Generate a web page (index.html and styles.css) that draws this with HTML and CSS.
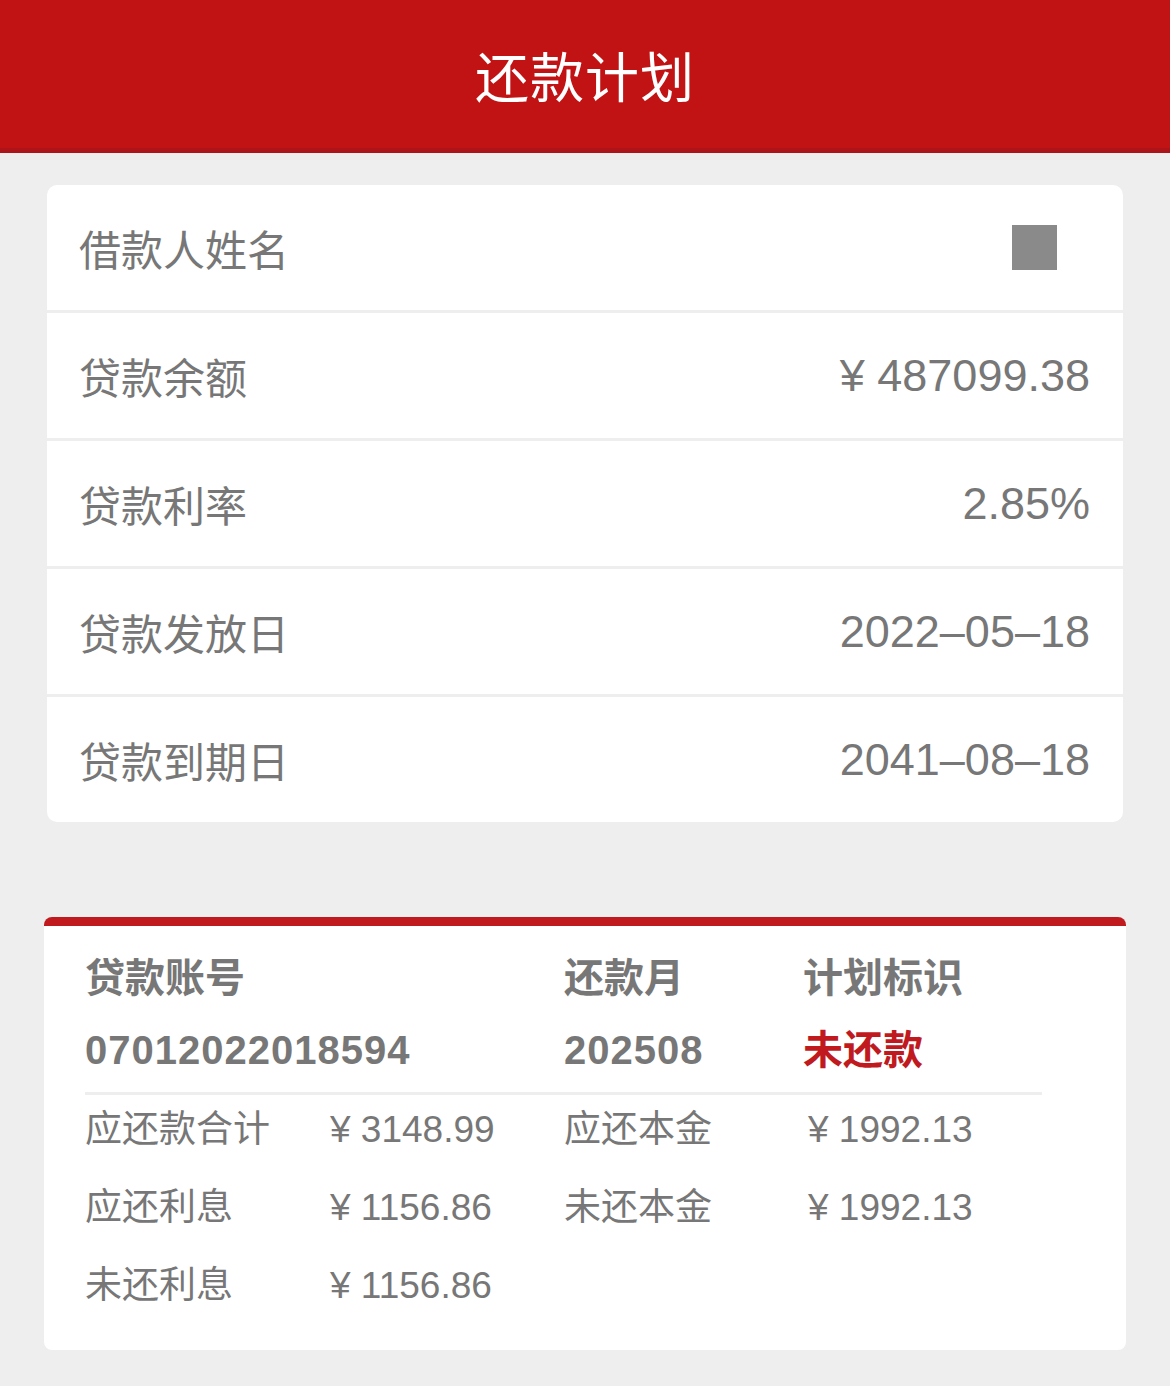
FILE: index.html
```html
<!doctype html>
<html lang="zh-CN">
  <head>
    <meta charset="UTF-8" />
    <meta name="viewport" content="width=device-width, initial-scale=1.0" />
    <title>还款计划</title>
    <link rel="stylesheet" href="styles.css">
  </head>
  <body>
    <header class="top-bar">
      <h1>还款计划</h1>
    </header>

    <section class="info-card">
      <div class="info-row">
        <span class="info-label">借款人姓名</span>
        <span class="name-mask"></span>
      </div>
      <div class="info-row">
        <span class="info-label">贷款余额</span>
        <span class="info-value">¥ 487099.38</span>
      </div>
      <div class="info-row">
        <span class="info-label">贷款利率</span>
        <span class="info-value">2.85%</span>
      </div>
      <div class="info-row">
        <span class="info-label">贷款发放日</span>
        <span class="info-value">2022–05–18</span>
      </div>
      <div class="info-row">
        <span class="info-label">贷款到期日</span>
        <span class="info-value">2041–08–18</span>
      </div>
    </section>

    <section class="plan-card">
      <div class="plan-head">
        <span class="head-title wide">贷款账号</span>
        <span class="head-title">还款月</span>
        <span class="head-title">计划标识</span>
        <span class="head-value wide">07012022018594</span>
        <span class="head-value">202508</span>
        <span class="head-value status">未还款</span>
      </div>
      <div class="plan-detail">
        <span class="detail-label">应还款合计</span>
        <span class="detail-value">¥ 3148.99</span>
        <span class="detail-label">应还本金</span>
        <span class="detail-value last">¥ 1992.13</span>

        <span class="detail-label">应还利息</span>
        <span class="detail-value">¥ 1156.86</span>
        <span class="detail-label">未还本金</span>
        <span class="detail-value last">¥ 1992.13</span>

        <span class="detail-label">未还利息</span>
        <span class="detail-value">¥ 1156.86</span>
      </div>
    </section>
  </body>
</html>
```

FILE: styles.css
```css
body {
  margin: 0;
  padding: 0;
  background-color: #eeeeee;
  font-family: "Liberation Sans", "Noto Sans CJK SC", sans-serif;
  color: #777777;
}
.top-bar {
  height: 148px;
  background-color: #c11214;
  border-bottom: 5px solid #ad141a;
  display: flex;
  align-items: center;
  justify-content: center;
}
.top-bar h1 {
  margin: 0;
  color: #ffffff;
  font-size: 54px;
  font-weight: 400;
  letter-spacing: 1px;
}
/* basic info */
.info-card {
  margin: 32px 47px 0 47px;
  background-color: #ffffff;
  border-radius: 10px;
}
.info-row {
  height: 125px;
  display: flex;
  align-items: center;
  justify-content: space-between;
  padding: 0 33px 0 32px;
  border-bottom: 3px solid #eeeeee;
}
.info-row:last-child {
  border-bottom: none;
}
.info-label {
  font-size: 42px;
}
.info-value {
  font-size: 45px;
}
.name-mask {
  width: 45px;
  height: 45px;
  background-color: #8a8a8a;
  margin-right: 33px;
}
/* repayment plan */
.plan-card {
  margin: 95px 44px 0 44px;
  background-color: #ffffff;
  border-top: 9px solid #c11a1e;
  border-radius: 8px;
  padding: 24px 41px 29px 41px;
}
.plan-head,
.plan-detail {
  width: 957px;
  display: grid;
  grid-template-columns: 245px 234px 239px 1fr;
}
.plan-head {
  row-gap: 16px;
  padding-bottom: 14px;
  border-bottom: 3px solid #eeeeee;
}
.wide {
  grid-column: span 2;
}
.head-title,
.head-value {
  line-height: 56px;
  font-size: 40px;
  font-weight: 700;
}
.head-value {
  letter-spacing: 1px;
}
.head-value.status {
  color: #c01a1f;
  letter-spacing: 0;
}
.plan-detail {
  row-gap: 8px;
}
.detail-label,
.detail-value {
  line-height: 70px;
  font-size: 37px;
}
.detail-value.last {
  padding-left: 5px;
}
```
